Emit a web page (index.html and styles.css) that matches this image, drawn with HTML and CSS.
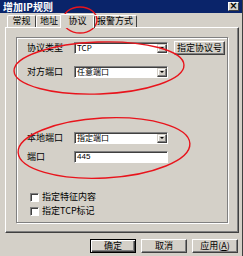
FILE: index.html
```html
<!DOCTYPE html>
<html>
<head>
<meta charset="utf-8">
<link rel="stylesheet" href="styles.css">
</head>
<body>
<div class="window">
  <div class="titlebar">
    <span class="title">增加IP规则</span>
    <span class="close">×</span>
  </div>
  <div class="tabs">
    <div class="tab t1">常规</div>
    <div class="tab t2">地址</div>
    <div class="tab active t3">协议</div>
    <div class="tab t4">报警方式</div>
  </div>
  <div class="panel">
    <div class="group">
      <div class="row r1">
        <span class="label">协议类型</span>
        <div class="combo"><span class="val">TCP</span><span class="drop"><i></i></span></div>
        <button class="btn spec">指定协议号</button>
      </div>
      <div class="row r2">
        <span class="label">对方端口</span>
        <div class="combo"><span class="val">任意端口</span><span class="drop"><i></i></span></div>
      </div>
      <div class="row r3">
        <span class="label">本地端口</span>
        <div class="combo"><span class="val">指定端口</span><span class="drop"><i></i></span></div>
      </div>
      <div class="row r4">
        <span class="label">端口</span>
        <div class="input"><span class="val">445</span></div>
      </div>
      <div class="check c1"><span class="box"></span><span>指定特征内容</span></div>
      <div class="check c2"><span class="box"></span><span>指定TCP标记</span></div>
    </div>
  </div>
  <div class="buttons">
    <button class="btn dlg default">确定</button>
    <button class="btn dlg">取消</button>
    <button class="btn dlg">应用(<u>A</u>)</button>
  </div>
</div>
<svg class="marks" width="243" height="256" viewBox="0 0 243 256">
  <ellipse cx="80" cy="20" rx="17" ry="13" />
  <ellipse cx="99" cy="68" rx="85" ry="26" transform="rotate(-2 99 68)" />
  <ellipse cx="104" cy="148" rx="86" ry="30" transform="rotate(-3 104 148)" />
</svg>
</body>
</html>
```
FILE: styles.css
```css
* { box-sizing: border-box; }
html, body { margin: 0; padding: 0; }
body {
  width: 243px;
  height: 256px;
  overflow: hidden;
  background: #d4d0c8;
  font-family: "Noto Sans CJK SC", "Liberation Sans", sans-serif;
  font-size: 9px;
  color: #000;
  position: relative;
}
.window {
  width: 243px;
  height: 256px;
  display: flex;
  flex-direction: column;
  border-right: 1px solid #404040;
}
.titlebar {
  height: 13px;
  background: #0a246a;
  color: #fff;
  display: flex;
  align-items: center;
  justify-content: space-between;
  padding: 0 3px 0 3px;
}
.title { font-weight: bold; font-size: 10px; line-height: 11px; }
.close {
  width: 11px;
  height: 9px;
  background: #d4d0c8;
  color: #000;
  border: 1px solid;
  border-color: #fff #404040 #404040 #fff;
  font-size: 10px;
  font-weight: bold;
  line-height: 6px;
  text-align: center;
  font-family: "DejaVu Sans", sans-serif;
}
.tabs {
  display: flex;
  align-items: flex-end;
  height: 14px;
  margin: 0 0 0 5px;
  position: relative;
  z-index: 1;
}
.tab {
  height: 12px;
  padding: 0;
  white-space: nowrap;
  border: 1px solid;
  border-color: #fff #404040 transparent #fff;
  border-bottom: none;
  border-radius: 2px 2px 0 0;
  line-height: 10px;
  text-align: center;
  flex: none;
}
.t1 { width: 29px; margin-left: 2px; }
.t2 { width: 26px; }
.t3 { width: 35px; }
.t4 { width: 44px; }
.tab.active {
  height: 14px;
  margin: 0 -2px -1px -2px;
  background: #d4d0c8;
  line-height: 12px;
}
.panel {
  width: 234px;
  height: 206px;
  margin-left: 5px;
  border: 1px solid;
  border-color: #fff #404040 #404040 #fff;
  box-shadow: inset -1px -1px #808080;
  padding: 9px 9px 9px 10px;
}
.group {
  width: 212px;
  height: 186px;
  border: 1px solid #808080;
  box-shadow: inset 1px 1px #fff, 1px 1px #fff;
  padding: 3px 0 0 10px;
  display: flex;
  flex-direction: column;
}
.row {
  display: flex;
  align-items: center;
  height: 14px;
}
.label { width: 47px; line-height: 12px; }
.combo, .input {
  width: 94px;
  height: 12px;
  background: #fff;
  border: 1px solid;
  border-color: #808080 #fff #fff #808080;
  box-shadow: inset 1px 1px #404040;
  display: flex;
  align-items: center;
  padding-left: 2px;
  line-height: 10px;
  font-size: 8px;
}
.val { flex: 1; }
.combo .val { font-family: "Noto Sans CJK SC", "Liberation Serif", serif; }
.drop {
  width: 10px;
  height: 9px;
  background: #d4d0c8;
  border: 1px solid;
  border-color: #d4d0c8 #404040 #404040 #d4d0c8;
  box-shadow: inset -1px -1px #808080, inset 1px 1px #fff;
  display: flex;
  align-items: center;
  justify-content: center;
}
.drop i {
  width: 0;
  height: 0;
  border-left: 2px solid transparent;
  border-right: 2px solid transparent;
  border-top: 2px solid #000;
}
.btn {
  font-family: "Noto Sans CJK SC", "Liberation Sans", sans-serif;
  font-size: 9px;
  background: #d4d0c8;
  border: 1px solid;
  border-color: #fff #404040 #404040 #fff;
  box-shadow: inset -1px -1px #808080;
  padding: 0;
  color: #000;
  line-height: 10px;
  white-space: nowrap;
}
.spec { width: 51px; height: 14px; margin-left: 6px; }
.r2 { margin-top: 10px; }
.r3 { margin-top: 52px; }
.r4 { margin-top: 5px; }
.r4 .input { font-family: "Liberation Sans", sans-serif; }
.check {
  display: flex;
  align-items: center;
  height: 12px;
  margin-left: 3px;
  line-height: 10px;
}
.c1 { margin-top: 27px; }
.c2 { margin-top: 2px; }
.box {
  width: 9px;
  height: 9px;
  background: #fff;
  border: 1px solid;
  border-color: #808080 #fff #fff #808080;
  box-shadow: inset 1px 1px #404040;
  margin-right: 3px;
}
.buttons {
  display: flex;
  justify-content: flex-end;
  gap: 5px;
  margin-top: 6px;
  padding-right: 4px;
}
.dlg { width: 46px; height: 14px; }
.dlg.default {
  border: 1px solid #000;
  box-shadow: inset 1px 1px #fff, inset -1px -1px #404040, inset -2px -2px #808080;
}
.marks {
  position: absolute;
  left: 0;
  top: 0;
  pointer-events: none;
}
.marks ellipse {
  fill: none;
  stroke: #e8141c;
  stroke-width: 1.4;
}
```
